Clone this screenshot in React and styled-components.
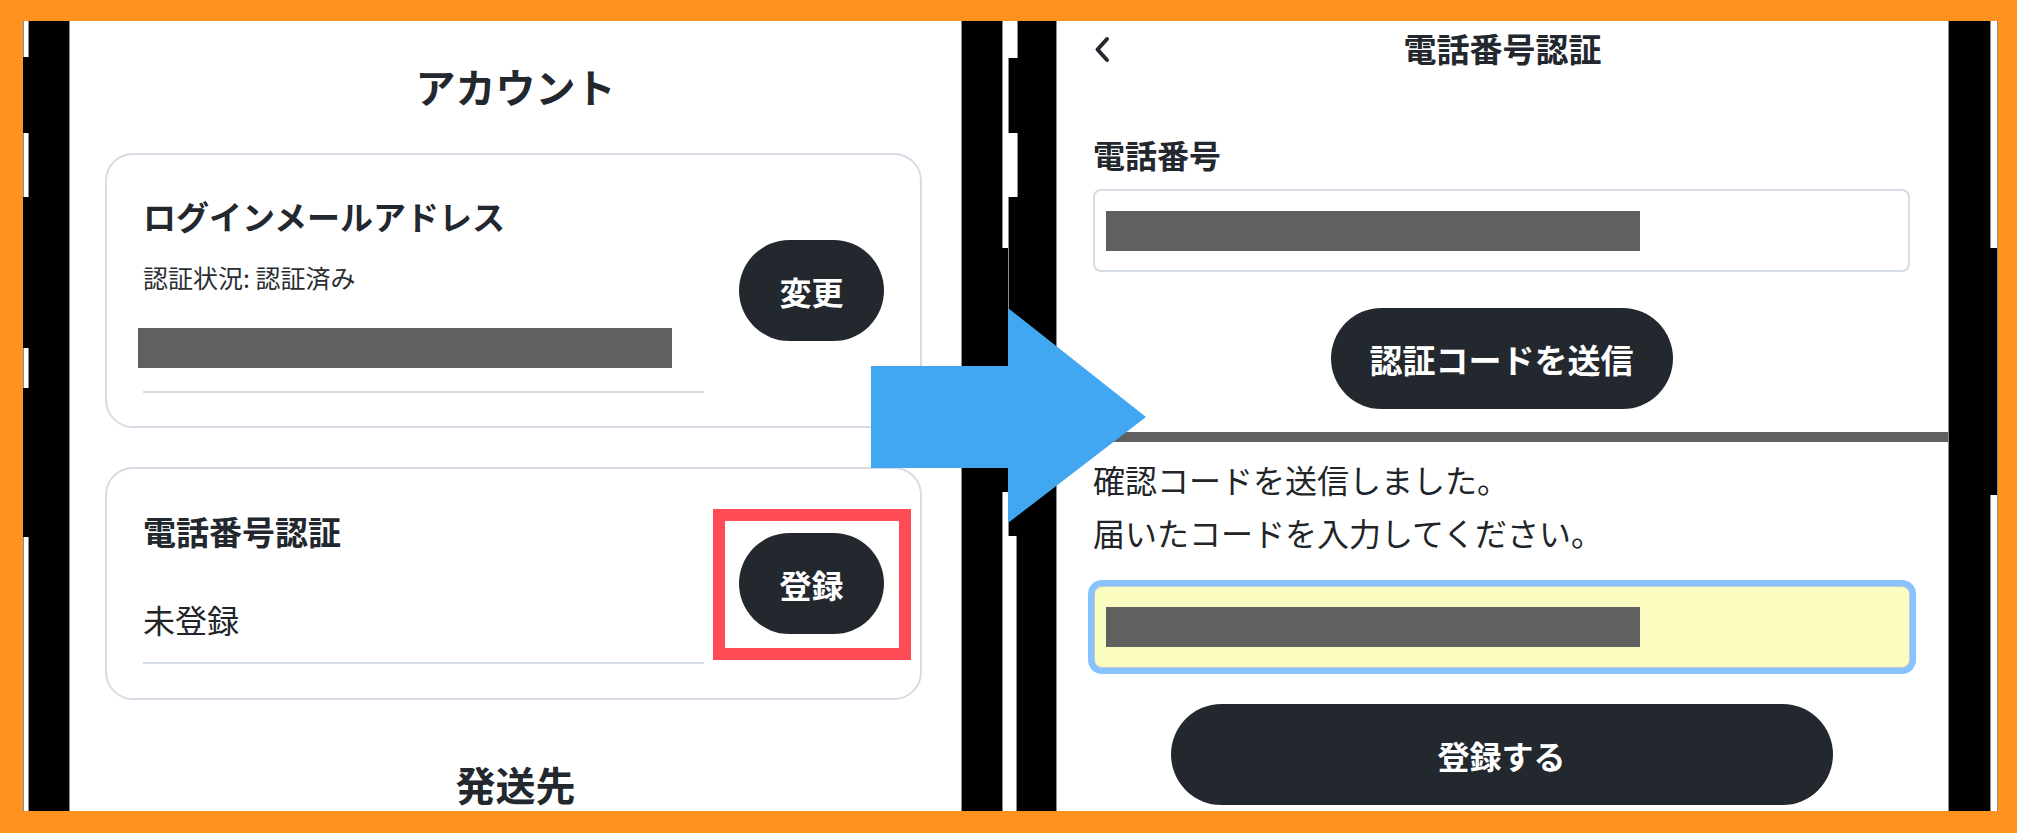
import React from 'react'
import styled, { createGlobalStyle } from 'styled-components'

const FONT = `"Noto Sans CJK JP", "Noto Sans", sans-serif`

const GlobalStyle = createGlobalStyle`
	html, body {
		margin: 0;
		padding: 0;
		background: #fe9322;
		overflow: hidden;
	}
	* {
		box-sizing: border-box;
	}
`

const Frame = styled.div`
	position: relative;
	width: 2017px;
	height: 833px;
	padding: 21px 19px 22px 23px;
	background: #fe9322;
	font-family: ${FONT};
	color: #212529;
`

const Strip = styled.div`
	display: flex;
	height: 100%;
`

const Bezel = styled.div`
	position: relative;
	flex-shrink: 0;
	width: ${(p) => p.$width}px;
	height: 100%;
	background: #000;
	border-left: ${(p) => (p.$edgeLeft ? '1px solid #8d8d8d' : 'none')};
	border-right: ${(p) => (p.$edgeRight ? '1px solid #8d8d8d' : 'none')};
`

// white slivers: edges of the other screenshots peeking through the bezel
const Sliver = styled.div`
	position: absolute;
	left: ${(p) => p.$left}px;
	top: ${(p) => p.$top}px;
	width: ${(p) => p.$width}px;
	height: ${(p) => p.$height}px;
	background: #fff;
	border: 1px solid #8d8d8d;
	border-top: none;
	border-bottom: none;
`

const Seam = styled.div`
	position: absolute;
	left: ${(p) => p.$left}px;
	top: ${(p) => p.$top}px;
	width: 1px;
	height: ${(p) => p.$height}px;
	background: #8d8d8d;
`

const Screen = styled.div`
	flex-shrink: 0;
	width: 891px;
	height: 100%;
	background: #fff;
	overflow: hidden;
	display: flex;
	flex-direction: column;
`

const PageTitle = styled.h1`
	margin: 41px 0 0;
	font-size: 40px;
	line-height: 48px;
	font-weight: 700;
	text-align: center;
	color: #23272e;
`

const CardList = styled.div`
	display: flex;
	flex-direction: column;
	gap: 39px;
	padding: 0 39px 0 35px;
	margin-top: 43px;
`

const Card = styled.div`
	display: flex;
	align-items: center;
	gap: 35px;
	padding: 0 36px;
	border: 2px solid #d5dce4;
	border-radius: 28px;
`

const CardBody = styled.div`
	flex: 1;
	padding: ${(p) => p.$pad};
`

const CardTitle = styled.div`
	font-size: 33px;
	line-height: 40px;
	font-weight: 700;
	color: #23272e;
`

const Status = styled.div`
	margin-top: 26px;
	font-size: 25px;
	line-height: 30px;
	color: #2b2f33;
`

const Field = styled.div`
	margin-top: ${(p) => p.$top}px;
	padding-bottom: 23px;
	border-bottom: 2px solid #d5dce4;
	font-size: 32px;
	line-height: 40px;
`

const Redacted = styled.div`
	width: 534px;
	height: 40px;
	margin-left: ${(p) => p.$shift || 0}px;
	background: #606060;
`

const PillButton = styled.button`
	flex-shrink: 0;
	width: ${(p) => p.$width}px;
	height: 101px;
	border: none;
	border-radius: 51px;
	background: #23272e;
	color: #fff;
	font-family: ${FONT};
	font-size: ${(p) => p.$size || 32}px;
	font-weight: 700;
	padding: 0;
	cursor: pointer;
`

const Highlight = styled.div`
	position: relative;
	flex-shrink: 0;
	display: flex;
`

const HighlightRing = styled.div`
	position: absolute;
	inset: -24px -27px -26px -26px;
	border: 12px solid #ff4b55;
	pointer-events: none;
`

const SectionTitle = styled.div`
	margin-top: 59px;
	text-align: center;
	font-size: 40px;
	line-height: 50px;
	font-weight: 700;
	color: #23272e;
`

const Header = styled.div`
	display: grid;
	grid-template-columns: 1fr auto 1fr;
	align-items: center;
	height: 54px;
`

const BackButton = styled.div`
	display: flex;
	align-items: center;
	padding-left: 36px;
	padding-top: 2px;
`

const HeaderTitle = styled.div`
	font-size: 33px;
	line-height: 40px;
	font-weight: 700;
	color: #23272e;
`

const Section = styled.div`
	display: flex;
	flex-direction: column;
	padding: 0 38px 0 36px;
`

const Label = styled.div`
	margin-top: 59px;
	font-size: 32px;
	line-height: 40px;
	font-weight: 700;
	color: #23272e;
`

const InputBox = styled.div`
	display: flex;
	align-items: center;
	height: ${(p) => (p.$focused ? 82 : 83)}px;
	margin-top: ${(p) => p.$top}px;
	margin-left: ${(p) => (p.$focused ? 1 : 0)}px;
	padding-left: 11px;
	border: ${(p) => (p.$focused ? '1px solid #c3cad3' : '2px solid #d5dce4')};
	border-radius: 8px;
	background: ${(p) => (p.$focused ? '#fafcc0' : '#fff')};
	box-shadow: ${(p) => (p.$focused ? '0 0 0 6px #88c3ff' : 'none')};
`

const Centered = styled.div`
	display: flex;
	justify-content: center;
	margin-top: 36px;
`

const Divider = styled.div`
	margin-top: 23px;
	height: 10px;
	background: #606060;
`

const Message = styled.p`
	margin: 11px 0 0;
	font-size: 32px;
	line-height: 53px;
	color: #212529;
`

function ChevronLeft() {
	return (
		<svg width="18" height="27" viewBox="0 0 18 27">
			<path d="M14 3 L4.5 13.5 L14 24" fill="none" stroke="#23272e" strokeWidth="4" strokeLinecap="round" strokeLinejoin="round" />
		</svg>
	)
}

const ArrowWrap = styled.svg`
	position: absolute;
	left: 871px;
	top: 308px;
`

function BlueArrow() {
	return (
		<ArrowWrap width="276" height="216" viewBox="0 0 276 216">
			<polygon points="0,58 137,58 137,0 275,109 137,215 137,160 0,160" fill="#42a7f1" />
		</ArrowWrap>
	)
}

function AccountScreen() {
	return (
		<Screen>
			<PageTitle>アカウント</PageTitle>
			<CardList>
				<Card>
					<CardBody $pad="41px 0 33px">
						<CardTitle>ログインメールアドレス</CardTitle>
						<Status>認証状況: 認証済み</Status>
						<Field $top={36}>
							<Redacted $shift={-5} />
						</Field>
					</CardBody>
					<PillButton $width={145}>変更</PillButton>
				</Card>
				<Card>
					<CardBody $pad="42px 0 34px">
						<CardTitle>電話番号認証</CardTitle>
						<Field $top={48}>未登録</Field>
					</CardBody>
					<Highlight>
						<PillButton $width={145}>登録</PillButton>
						<HighlightRing />
					</Highlight>
				</Card>
			</CardList>
			<SectionTitle>発送先</SectionTitle>
		</Screen>
	)
}

function PhoneScreen() {
	return (
		<Screen>
			<Header>
				<BackButton>
					<ChevronLeft />
				</BackButton>
				<HeaderTitle>電話番号認証</HeaderTitle>
				<div />
			</Header>
			<Section>
				<Label>電話番号</Label>
				<InputBox $top={15}>
					<Redacted />
				</InputBox>
				<Centered>
					<PillButton $width={342} $size={33}>認証コードを送信</PillButton>
				</Centered>
			</Section>
			<Divider />
			<Section>
				<Message>
					確認コードを送信しました。
					<br />
					届いたコードを入力してください。
				</Message>
				<InputBox $top={27} $focused>
					<Redacted />
				</InputBox>
				<Centered>
					<PillButton $width={662}>登録する</PillButton>
				</Centered>
			</Section>
		</Screen>
	)
}

export default function App() {
	return (
		<>
			<GlobalStyle />
			<Frame>
				<Strip>
					<Bezel $width={47} $edgeRight>
						<Sliver $left={0} $top={0} $width={6} $height={36} />
						<Sliver $left={0} $top={112} $width={6} $height={64} />
						<Sliver $left={0} $top={327} $width={6} $height={40} />
						<Sliver $left={0} $top={516} $width={6} $height={274} />
					</Bezel>
					<AccountScreen />
					<Bezel $width={96} $edgeLeft $edgeRight>
						<Sliver $left={40} $top={0} $width={16} $height={37} />
						<Sliver $left={40} $top={37} $width={7} $height={75} />
						<Sliver $left={40} $top={112} $width={16} $height={64} />
						<Sliver $left={40} $top={176} $width={7} $height={51} />
						<Seam $left={46} $top={227} $height={244} />
						<Sliver $left={40} $top={471} $width={7} $height={44} />
						<Sliver $left={40} $top={515} $width={15} $height={275} />
					</Bezel>
					<PhoneScreen />
					<Bezel $width={50} $edgeLeft>
						<Sliver $left={41} $top={0} $width={8} $height={227} />
						<Seam $left={48} $top={227} $height={247} />
						<Sliver $left={41} $top={474} $width={8} $height={316} />
					</Bezel>
				</Strip>
				<BlueArrow />
			</Frame>
		</>
	)
}
